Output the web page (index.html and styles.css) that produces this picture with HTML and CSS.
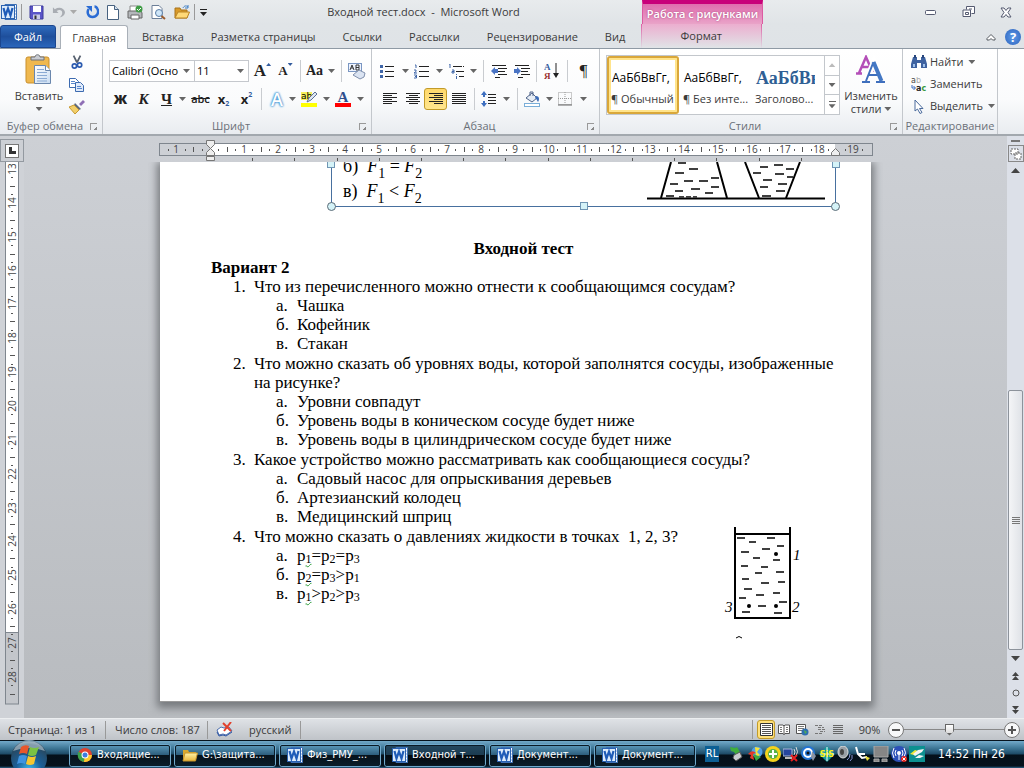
FILE: index.html
```html
<!DOCTYPE html>
<html lang="ru">
<head>
<meta charset="utf-8">
<title>Входной тест.docx - Microsoft Word</title>
<link rel="stylesheet" href="styles.css">
</head>
<body>
<svg class="defs" width="0" height="0" aria-hidden="true">
  <defs>
    <linearGradient id="gPaper" x1="0" y1="0" x2="1" y2="1"><stop offset="0" stop-color="#fff"/><stop offset="1" stop-color="#c8dcf2"/></linearGradient>
    <linearGradient id="gFolder" x1="0" y1="0" x2="0" y2="1"><stop offset="0" stop-color="#fff3a8"/><stop offset="1" stop-color="#e8b53a"/></linearGradient>
    <radialGradient id="gOrb" cx=".5" cy=".85" r=".9"><stop offset="0" stop-color="#3fc0f4"/><stop offset=".4" stop-color="#1b5f98"/><stop offset=".8" stop-color="#28485f"/><stop offset="1" stop-color="#a9c9dc"/></radialGradient>
  </defs>
  <symbol id="word" viewBox="0 0 16 16"><path d="M4 .5h11.500v15H4z" fill="#fff" stroke="#3c6fb5"/><path d="M13 4h2M13 7h2M13 10h2M13 13h2" stroke="#7ba3d8"/><rect x=".5" y="1.500" width="13" height="13" fill="#dcebfb" stroke="#2a62b0"/><path d="M2.500 4l2 7.500L7 4.500l2.500 7 2-7.500" fill="none" stroke="#1f5cb8" stroke-width="2.200"/></symbol>
  <symbol id="undo" viewBox="0 0 14 14"><path d="M1 2v6h6L5 6c3-2 6-1 6 2 0 2-1 3-3 5 4-1 6-3 6-6C13 3 8 1 3 4z"/></symbol>
</svg>

<header class="titlebar">
  <div class="quick">
    <svg width="16" height="16"><use href="#word"/></svg>
    <i class="bar"></i>
    <button class="save" aria-label="Сохранить"><svg width="15" height="15" viewBox="0 0 15 15"><path d="M1 1h13v13H2l-1-1z" fill="#5a55c8" stroke="#3d3a9a"/><path d="M4 1h8v6H4z" fill="#fff"/><path d="M4 9.500h7V14H4z" fill="#c9cce8"/><path d="M5.500 10.500h2V14h-2z" fill="#333"/></svg></button>
    <button aria-label="Отменить"><svg width="13" height="14" fill="#a9adb3"><use href="#undo"/></svg></button>
    <i class="arrow pale"></i>
    <button aria-label="Повторить"><svg width="13" height="14" viewBox="0 0 13 14"><path d="M2.500 4c-2 4 0 8 4 8s7-4 5-8c-.7-1.500-2-2.500-3-2.500" fill="none" stroke="#2b6cd4" stroke-width="2.500"/><path d="M0 1h6v6z" fill="#2b6cd4"/></svg></button>
    <button aria-label="Создать"><svg width="12" height="15" viewBox="0 0 12 15"><path d="M.5.500h7l4 4v10H.5z" fill="#fff" stroke="#46617f"/><path d="M7.500.500v4h4" fill="#d5e2f0" stroke="#46617f"/></svg></button>
    <button aria-label="Печать"><svg width="16" height="15" viewBox="0 0 16 15"><path d="M3 1h8v6H3z" fill="#fff" stroke="#888"/><path d="M1 6h13l1 2v5H1z" fill="#b4b7bb" stroke="#666"/><path d="M4 10h8v4H4z" fill="#fff" stroke="#666"/><circle cx="12" cy="4" r="3.500" fill="#3f9c45"/><path d="M10 4l1.500 1.500L14 3" fill="none" stroke="#fff"/></svg></button>
    <button aria-label="Просмотр"><svg width="15" height="15" viewBox="0 0 15 15"><path d="M1 .5h7l3 3v10H1z" fill="#fff" stroke="#6c7f98"/><circle cx="8" cy="8" r="3.500" fill="#cfe6f8" stroke="#5a7da5"/><path d="M10.500 11l3.500 3" stroke="#9a5b2c" stroke-width="2"/></svg></button>
    <button aria-label="Открыть"><svg width="16" height="14" viewBox="0 0 16 14"><path d="M1 3h5l1 2h6v8H1z" fill="#d99a28" stroke="#a8731c"/><path d="M1 13l3-6h11.500L13 13z" fill="#ffd977" stroke="#b98424"/><path d="M9 3c1-2 3-3 5-1m0-2v3h-3" fill="none" stroke="#3d7dc4"/></svg></button>
    <i class="bar"></i>
    <button aria-label="Настройка панели"><svg width="7" height="7" viewBox="0 0 7 7"><path d="M0 .5h7" stroke="#222"/><path d="M0 3h7L3.500 7z" fill="#222"/></svg></button>
  </div>
  <h1 class="title">Входной тест.docx&nbsp; -&nbsp; Microsoft Word</h1>
  <div class="context-title">Работа с рисунками</div>
  <div class="win">
    <button aria-label="Свернуть"><svg width="12" height="12" viewBox="0 0 12 12"><rect x=".5" y="4.500" width="10" height="4" rx="1" fill="#fff" stroke="#555a70"/></svg></button>
    <button aria-label="Развернуть"><svg width="13" height="13" viewBox="0 0 13 13"><path d="M4.500 3.500v-3h8v7h-3M1 4h7.500v6.500H1z" fill="#fff" stroke="#555a70"/><path d="M3.500 6.500h3v2h-3zM7 3h3" fill="none" stroke="#555a70"/></svg></button>
    <button aria-label="Закрыть"><svg width="12" height="11" viewBox="0 0 12 11"><path d="M1 1h3l2 2.500L8 1h3L8 5.500l3 4.500H8L6 7.500 4 10H1l3-4.500z" fill="#fff" stroke="#555a70"/></svg></button>
  </div>
</header>

<nav class="tabs">
  <button class="file">Файл</button>
  <button class="tab active">Главная</button>
  <button class="tab">Вставка</button>
  <button class="tab">Разметка страницы</button>
  <button class="tab">Ссылки</button>
  <button class="tab">Рассылки</button>
  <button class="tab">Рецензирование</button>
  <button class="tab">Вид</button>
  <button class="tab context">Формат</button>
  <div class="help">
    <button aria-label="Свернуть ленту"><svg width="10" height="8" viewBox="0 0 10 8"><path d="M1 5.500l4-4 4 4v1.500H6.500L5 5.500 3.500 7H1z" fill="#fff" stroke="#555a60"/></svg></button>
    <button class="qmark" aria-label="Справка">?</button>
  </div>
</nav>

<section class="ribbon">
  <div class="group clipboard">
    <div class="body">
      <button class="big paste"><svg width="28" height="32" viewBox="0 0 28 32"><rect x="1" y="3" width="23" height="26" rx="2" fill="#efb84f" stroke="#c98f2c"/><path d="M6 6V3h4c0-3 5-3 5 0h4v3z" fill="#c9ccd2" stroke="#6c7078"/><path d="M9.500 11.500h11l5 5v13h-16z" fill="url(#gPaper)" stroke="#6a87ad"/><path d="M20.500 11.500v5h5" fill="#fff" stroke="#6a87ad"/><path d="M12 15.500h7M12 18.500h10M12 21.500h10M12 24.500h10M12 27h10" stroke="#8aaad4"/></svg><span>Вставить</span><i class="arrow"></i></button>
      <div class="side">
        <button aria-label="Вырезать"><svg width="12" height="15" viewBox="0 0 14 16"><path d="M3 0l4 8M11 0L7 8" stroke="#56606e" stroke-width="2"/><circle cx="4" cy="12" r="2.500" fill="none" stroke="#2c5bb0" stroke-width="2"/><circle cx="10" cy="11" r="2.500" fill="none" stroke="#2c5bb0" stroke-width="2"/></svg></button>
        <button aria-label="Копировать"><svg width="16" height="14" viewBox="0 0 16 14"><path d="M.5.500h6l3 3v6h-9z" fill="#fff" stroke="#3d6bb0"/><path d="M6.500 4.500h5l3 3v6h-8z" fill="#dfeafa" stroke="#3d6bb0"/><path d="M2 3.500h4M2 5.500h4M8 8.500h4M8 10.500h5" stroke="#5a88cc"/></svg></button>
        <button aria-label="Формат по образцу"><svg width="16" height="14" viewBox="0 0 16 14"><path d="M10 4l4-4 2 2-4 4z" fill="#8f6fb5"/><path d="M6 3l6 6-2 1-5-5z" fill="#5e6a7c"/><path d="M5 5l5 5-4 4-6-7z" fill="#f2cf6a" stroke="#c69a34"/></svg></button>
      </div>
    </div>
    <div class="label"><span>Буфер обмена</span><i class="launcher"></i></div>
  </div>

  <div class="group font">
    <div class="body rows">
      <div class="row">
        <select class="family" aria-label="Шрифт"><option>Calibri (Осно</option></select><select class="size" aria-label="Размер"><option>11</option></select>
        <button class="t serif grow" aria-label="Увеличить">A<i class="up"></i></button>
        <button class="t serif shrink" aria-label="Уменьшить">A<i class="down"></i></button>
        <i class="sep"></i>
        <button class="t drop serif case">Aa<i class="arrow"></i></button>
        <i class="sep"></i>
        <button class="t" aria-label="Очистить формат"><svg width="18" height="17" viewBox="0 0 18 17"><rect x=".5" y=".5" width="13" height="8" fill="#eef4ff" stroke="#7a96c2"/><path d="M2 7l2-5 2 5M3 5h2M8 2v5h3V4.500H8h3V2z" fill="none" stroke="#333"/><path d="M5 12l6-5 6 3-1 4-4 2z" fill="#dbe4f2" stroke="#7f8fac"/></svg></button>
      </div>
      <div class="row">
        <button class="t bold">Ж</button>
        <button class="t serif ital">К</button>
        <button class="t drop serif und"><u>Ч</u><i class="arrow"></i></button>
        <button class="t strike"><s>abc</s></button>
        <button class="t idx">x<sub>2</sub></button>
        <button class="t idx">x<sup>2</sup></button>
        <i class="sep"></i>
        <button class="t drop glow">A<i class="arrow"></i></button>
        <button class="t drop" aria-label="Выделение цветом"><svg width="17" height="17" viewBox="0 0 17 17"><rect y="1" width="11" height="8" fill="#f5ef5c"/><text x="0" y="8" font-size="9" class="svgsans">ab</text><path d="M6 11l2-4 6-6 2 2-6 6z" fill="#dfe7f2" stroke="#5d7096"/><rect y="12" width="16" height="4" fill="#ff0"/></svg><i class="arrow"></i></button>
        <button class="t drop" aria-label="Цвет текста"><svg width="16" height="17" viewBox="0 0 16 17"><text x="8" y="11" font-size="15" text-anchor="middle" class="svgserif" fill="#2f4f8f">A</text><rect y="12" width="16" height="4" fill="#f00"/></svg><i class="arrow"></i></button>
      </div>
    </div>
    <div class="label"><span>Шрифт</span><i class="launcher"></i></div>
  </div>

  <div class="group para">
    <div class="body rows">
      <div class="row">
        <button class="t drop" aria-label="Маркеры"><svg width="14" height="14" viewBox="0 0 14 14"><path d="M5 2.500h9M5 7.500h9M5 12.500h9" stroke="#222"/><path d="M0 1h3v3H0zM0 6h3v3H0zM0 11h3v3H0z" fill="#3f66a8"/></svg><i class="arrow"></i></button>
        <button class="t drop" aria-label="Нумерация"><svg width="15" height="15" viewBox="0 0 15 15"><path d="M5 2.500h10M5 7.500h10M5 12.500h10" stroke="#222"/><path d="M1 1h1v3M0 6h2v1.500L0 9h3M0 11h2.500v3H0M1 12.500h1" fill="none" stroke="#3f66a8"/></svg><i class="arrow"></i></button>
        <button class="t drop" aria-label="Многоуровневый список"><svg width="16" height="15" viewBox="0 0 16 15"><path d="M5 2.500h11M8 7.500h8M11 12.500h5" stroke="#222" stroke-dasharray="9 1"/><path d="M1 0h1v4M4 6h2v3H4V7.500h2M8.500 10v1M8.500 12v3" fill="none" stroke="#3f66a8"/></svg><i class="arrow"></i></button>
        <i class="sep"></i>
        <button class="t" aria-label="Уменьшить отступ"><svg width="16" height="14" viewBox="0 0 16 14"><path d="M1 1.500h14M7 4.500h9M7 7.500h7M7 10.500h9M4 13.500h5" stroke="#222"/><path d="M0 7l4-4v2h3v4H4v2z" fill="#4a74c4"/></svg></button>
        <button class="t" aria-label="Увеличить отступ"><svg width="16" height="14" viewBox="0 0 16 14"><path d="M1 1.500h14M7 4.500h9M7 7.500h7M7 10.500h9M4 13.500h5" stroke="#222"/><path d="M7 7L3 3v2H0v4h3v2z" fill="#4a74c4"/></svg></button>
        <i class="sep"></i>
        <button class="t" aria-label="Сортировка"><svg width="16" height="16" viewBox="0 0 16 16"><text x="0" y="7" font-size="9" class="svgserif" fill="#335c9e">А</text><text x="0" y="16" font-size="9" class="svgserif" fill="#9b2f2f">Я</text><path d="M12 0v12" stroke="#222"/><path d="M9 10h6l-3 5z" fill="#222"/></svg></button>
        <i class="sep wide"></i>
        <button class="t pil">¶</button>
      </div>
      <div class="row">
        <button class="t" aria-label="По левому краю"><svg width="14" height="12" viewBox="0 0 14 12"><path d="M0 .5h14M0 2.500h9M0 4.500h14M0 6.500h9M0 8.500h14M0 10.500h9" stroke="#222"/></svg></button>
        <button class="t" aria-label="По центру"><svg width="14" height="12" viewBox="0 0 14 12"><path d="M0 .5h14M3 2.500h9M0 4.500h14M3 6.500h9M0 8.500h14M3 10.500h9" stroke="#222"/></svg></button>
        <button class="t on" aria-label="По правому краю"><svg width="14" height="12" viewBox="0 0 14 12"><path d="M0 .5h14M5 2.500h9M0 4.500h14M5 6.500h9M0 8.500h14M5 10.500h9" stroke="#222"/></svg></button>
        <button class="t" aria-label="По ширине"><svg width="14" height="12" viewBox="0 0 14 12"><path d="M0 .5h14M0 2.500h14M0 4.500h14M0 6.500h14M0 8.500h14M0 10.500h14" stroke="#222"/></svg></button>
        <i class="sep wide"></i>
        <button class="t drop" aria-label="Интервал"><svg width="15" height="16" viewBox="0 0 15 16"><path d="M7 3.500h8M7 6.500h8M7 9.500h8M7 12.500h8" stroke="#222"/><path d="M3 0l3 4H4v2H2V4H0zM3 16l3-4H4v-2H2v2H0z" fill="#3e6fc0"/></svg><i class="arrow"></i></button>
        <i class="sep wide"></i>
        <button class="t drop" aria-label="Заливка"><svg width="16" height="16" viewBox="0 0 16 16"><path d="M2 7l6-5 5 5-5 4z" fill="#e6edf6" stroke="#51658a"/><path d="M6 5V1h3v4" fill="none" stroke="#51658a"/><path d="M12 5c3 0 4 3 2 6-1-1-1-3-3-4z" fill="#3a6ab8"/><rect x=".5" y="12.500" width="15" height="3" fill="#fff" stroke="#7aaed8"/></svg><i class="arrow"></i></button>
        <button class="t drop" aria-label="Границы"><svg width="14" height="14" viewBox="0 0 14 14"><path d="M.5.500h13v12H.5zM7 0v12M0 6.500h14" fill="none" stroke="#999" stroke-dasharray="1 1"/><path d="M0 13h14" stroke="#666"/></svg><i class="arrow"></i></button>
      </div>
    </div>
    <div class="label"><span>Абзац</span><i class="launcher"></i></div>
  </div>

  <div class="group styles">
    <div class="body">
      <div class="gallery">
        <button class="style sel"><b>АаБбВвГг,</b><span>¶ Обычный</span></button>
        <button class="style"><b>АаБбВвГг,</b><span>¶ Без инте...</span></button>
        <button class="style head"><b>АаБбВв</b><span>Заголово...</span></button>
        <div class="scroller"><button class="dis" aria-label="Вверх"><i class="arrow flip"></i></button><button aria-label="Вниз"><i class="arrow"></i></button><button aria-label="Ещё"><i class="line"></i><i class="arrow"></i></button></div>
      </div>
      <button class="big change"><svg width="30" height="29" viewBox="0 0 30 29"><g fill="none"><path d="M3 18L10 2l7 16M6 12h8M0 18.500h6M12 18.500h7" stroke="#b44fb8" stroke-width="2.500"/><path d="M10 26L18 7l8 19M13 20h10" stroke="#fff" stroke-width="6"/><path d="M10 26L17.500 7M13 20h9M6 27h8" stroke="#3f6fbd" stroke-width="2"/><path d="M17.500 7l8 19" stroke="#4478c4" stroke-width="4"/><path d="M20 27h9" stroke="#3f6fbd" stroke-width="2"/></g></svg><span>Изменить</span><span>стили <i class="arrow"></i></span></button>
    </div>
    <div class="label"><span>Стили</span><i class="launcher"></i></div>
  </div>

  <div class="group edit">
    <div class="body list">
      <button><svg width="16" height="14" viewBox="0 0 16 14"><path d="M2 2h4v3h4V2h4l2 7v4h-6V8H6v5H0V9z" fill="#3e62a0"/><path d="M3 0h2v3H3zM11 0h2v3h-2z" fill="#27457c"/><path d="M2 9h2v3H2zM12 9h2v3h-2z" fill="#9fc0ea"/></svg>Найти<i class="arrow"></i></button>
      <button><svg width="16" height="15" viewBox="0 0 16 15"><text x="0" y="6" font-size="8" class="svgsans" fill="#444">a<tspan fill="#aaa">b</tspan></text><text x="5" y="14" font-size="8" font-weight="bold" class="svgsans" fill="#222">a<tspan fill="#3a9a3e">c</tspan></text><path d="M1 8v3h3M2.500 9L4.500 11l-2 2" fill="none" stroke="#3e6fc0"/></svg>Заменить</button>
      <button><svg width="16" height="15" viewBox="0 0 16 15"><path d="M4 1v11l2.500-2L9 14.500l2-1-2.500-4H12z" fill="#fff" stroke="#4a6a9c"/></svg>Выделить<i class="arrow"></i></button>
    </div>
    <div class="label"><span>Редактирование</span></div>
  </div>
</section>

<main class="work">
  <div class="corner"><span><svg width="7" height="7" viewBox="0 0 7 7"><path d="M1.500 0v5.500H7" fill="none" stroke="#333" stroke-width="3"/></svg></span></div>
  <div class="hrule"><svg id="hruler" width="716" height="24" viewBox="0 0 716 24" role="img" aria-label="Горизонтальная линейка"></svg></div>
  <div class="rtop"><i></i><span><svg width="12" height="12" viewBox="0 0 12 12"><path d="M1 1h7v5H1zM5 5h6v6H5z" fill="#fff" stroke="#666" stroke-dasharray="2 1"/></svg></span></div>

  <div class="vrule"><svg id="vruler" width="14" height="543" viewBox="0 0 14 543" role="img" aria-label="Вертикальная линейка"></svg></div>

  <div class="canvas">
    <article class="page">
      <div class="picture">
        <div class="answers">
          <p>б)&nbsp; <em>F</em><sub>1</sub> = <em>F</em><sub>2</sub></p>
          <p>в)&nbsp; <em>F</em><sub>1</sub> &lt; <em>F</em><sub>2</sub></p>
        </div>
        <svg class="vessels" width="180" height="40" viewBox="0 0 180 40"><g stroke="#000" fill="none"><path d="M1 36.500h178" stroke-width="2"/><path d="M25 0L15 36M71 0l10 36M99 0l14 36M154 0l-14 36" stroke-width="2"/><path d="M32 1h8M43 7h9M29 11h9M65 16h8M38 19h9M53 19h9M24 22h8M45 27h9M65 25h8M29 29h8M59 31h8M20 34h8M128 3h9M114 5h8M140 7h8M107 11h8M129 12h9M141 15h6M117 18h9M132 22h9M114 25h8M130 29h9M116 34h9" stroke-width="1.500"/><path d="M33 35h18" stroke-width="2" stroke="#444" stroke-dasharray="5 2"/></g></svg>
        <i class="h tl"></i><i class="h tr"></i><i class="h bl"></i><i class="h bc"></i><i class="h br"></i>
      </div>
      <h2>Входной тест</h2>
      <h3>Вариант 2</h3>
      <ol class="quiz">
        <li><span class="n">1.</span><div>Что из перечисленного можно отнести к сообщающимся сосудам?
          <ul><li><span class="n">а.</span>Чашка</li><li><span class="n">б.</span>Кофейник</li><li><span class="n">в.</span>Стакан</li></ul></div></li>
        <li><span class="n">2.</span><div>Что можно сказать об уровнях воды, которой заполнятся сосуды, изображенные на рисунке?
          <ul><li><span class="n">а.</span>Уровни совпадут</li><li><span class="n">б.</span>Уровень воды в коническом сосуде будет ниже</li><li><span class="n">в.</span>Уровень воды в цилиндрическом сосуде будет ниже</li></ul></div></li>
        <li><span class="n">3.</span><div>Какое устройство можно рассматривать как сообщающиеся сосуды?
          <ul><li><span class="n">а.</span>Садовый насос для опрыскивания деревьев</li><li><span class="n">б.</span>Артезианский колодец</li><li><span class="n">в.</span>Медицинский шприц</li></ul></div></li>
        <li><span class="n">4.</span><div>Что можно сказать о давлениях жидкости в точках&nbsp; 1, 2, 3?
          <ul><li><span class="n">а.</span><span>р<sub class="g">1</sub>=р<sub>2</sub>=р<sub>3</sub></span></li><li><span class="n">б.</span><span>р<sub class="g">2</sub>=р<sub>3</sub>&gt;р<sub>1</sub></span></li><li><span class="n">в.</span><span>р<sub class="g">1</sub>&gt;р<sub>2</sub>&gt;р<sub>3</sub></span></li></ul></div>
          <svg class="tank" width="78" height="114" viewBox="0 0 78 114"><g fill="none" stroke="#000"><path d="M11 1v91h55V1M11 8h54" stroke-width="2"/><path d="M13 12h8M43 12h8M25 16h7M53 20h7M38 23h8M17 26h8M29 32h7M49 34h7M17 40h7M37 41h7M52 46h8M31 47h7M18 53h7M37 57h8M54 56h7M20 63h8M49 67h7M32 69h8M15 72h7M55 76h8M34 80h8M18 86h8M50 87h8" stroke-width="1.500"/><path d="M12 112q3-3 6 0" stroke-width="1"/></g><circle cx="52" cy="28" r="2"/><circle cx="25" cy="80" r="2"/><circle cx="52" cy="80" r="2"/><g class="svgital" font-size="15"><text x="69" y="34">1</text><text x="68" y="86">2</text><text x="1" y="86">3</text></g></svg></li>
      </ol>
    </article>
  </div>

  <div class="vscroll">
    <button class="sb" aria-label="Вверх"><i class="arrow flip dark"></i></button>
    <div class="trough"></div>
    <div class="thumb"><i></i><i></i><i></i><i></i></div>
    <button class="sb" aria-label="Вниз"><i class="arrow dark"></i></button>
    <button class="sb" aria-label="Предыдущая страница"><svg width="7" height="8" viewBox="0 0 7 8"><path d="M0 4l3.500-4L7 4zM0 8l3.500-4L7 8z" fill="#444"/></svg></button>
    <button class="sb" aria-label="Объект перехода"><svg width="8" height="8" viewBox="0 0 8 8"><circle cx="4" cy="4" r="3" fill="none" stroke="#555"/></svg></button>
    <button class="sb" aria-label="Следующая страница"><svg width="7" height="8" viewBox="0 0 7 8"><path d="M0 0h7L3.500 4zM0 4h7L3.500 8z" fill="#444"/></svg></button>
  </div>
</main>

<footer class="status">
  <span class="cell c1">Страница: 1 из 1</span>
  <span class="cell c2">Число слов: 187</span>
  <span class="cell c3"><svg width="17" height="15" viewBox="0 0 17 15"><path d="M1 8l4-3 3 1 5-1 3 4-6 4-3-1-4 1z" fill="#fff" stroke="#4b6dae"/><path d="M1 10l2 4 4-1 3 1 6-4" fill="none" stroke="#2d55a4"/><path d="M7 1l8 8M15 0L8 9" stroke="#e2402c" stroke-width="2"/></svg>русский</span>
  <div class="views">
    <button class="vb on" aria-label="Разметка страницы"><svg width="13" height="13" viewBox="0 0 13 13"><path d="M.5.500h12v12H.5z" fill="#fff" stroke="#333"/><path d="M2 2.500h9M2 4.500h9M2 6.500h9M2 8.500h9M2 10.500h9" stroke="#555"/></svg></button>
    <button class="vb" aria-label="Режим чтения"><svg width="12" height="12" viewBox="0 0 12 12"><path d="M.5 1h4.500l1 1 1-1h4.500v8.500H7l-1 1-1-1H.5zM6 2v9" fill="#fff" stroke="#555"/><path d="M2 3.500h2M2 5.500h2M2 7.500h2M8 3.500h2M8 5.500h2M8 7.500h2" stroke="#777"/></svg></button>
    <button class="vb" aria-label="Веб-документ"><svg width="13" height="12" viewBox="0 0 13 12"><path d="M.5.500h9v9h-9z" fill="#fff" stroke="#555"/><path d="M2 2.500h6M2 4.500h6M2 6.500h4" stroke="#777"/><circle cx="9" cy="8" r="3.500" fill="#2f6fae"/><path d="M8 6l3 2-2 2z" fill="#4fae53"/></svg></button>
    <button class="vb" aria-label="Структура"><svg width="10" height="10" viewBox="0 0 10 10"><path d="M0 .5h8M3 2.500h6M3 4.500h7M5 6.500h5M0 8.500h8" stroke="#777" stroke-dasharray="3 1"/></svg></button>
    <button class="vb" aria-label="Черновик"><svg width="10" height="10" viewBox="0 0 10 10"><path d="M0 .5h10M0 2.500h10M0 4.500h10M0 6.500h10M0 8.500h10" stroke="#666"/></svg></button>
  </div>
  <label class="pct" for="zoom">90%</label>
  <button class="zb" aria-label="Уменьшить масштаб"><svg width="16" height="16" viewBox="0 0 16 16"><circle cx="8" cy="8" r="7.500" fill="#f7f8f9" stroke="#777"/><path d="M4 8h8" stroke="#555" stroke-width="2"/></svg></button>
  <input id="zoom" class="zoom" type="range" min="0" max="100" value="45">
  <button class="zb" aria-label="Увеличить масштаб"><svg width="16" height="16" viewBox="0 0 16 16"><circle cx="8" cy="8" r="7.500" fill="#f7f8f9" stroke="#777"/><path d="M4 8h8M8 4v8" stroke="#555" stroke-width="2"/></svg></button>
</footer>

<footer class="taskbar">
  <button class="start" aria-label="Пуск"><svg width="38" height="28" viewBox="0 0 38 28"><circle cx="19" cy="18" r="18" fill="url(#gOrb)"/><path d="M3 11a18 18 0 0 1 32 0q-16-6-32 0" fill="#cfe0ea" opacity=".55"/><path d="M11 7q4-3 8-1l-2 8q-4-2-8 0z" fill="#e8572c"/><path d="M20 7q4 2 9 0l-3 8q-4 2-8 0z" fill="#7cc243"/><path d="M9 16q4-2 8 0l-2 8q-4-2-8 0z" fill="#3f93e0"/><path d="M18 16q4 2 8 0l-2 8q-4 2-8 0z" fill="#f7c62f"/></svg></button>
  <div class="tasks">
    <button><svg width="16" height="16" viewBox="0 0 16 16"><circle cx="8" cy="8" r="7" fill="#e0432f"/><path d="M8 8L1.500 4.800A7 7 0 0 0 7 15z" fill="#3ba24b"/><path d="M8 8h7A7 7 0 0 1 7 15z" fill="#fbcb2e"/><circle cx="8" cy="8" r="3.500" fill="#fff"/><circle cx="8" cy="8" r="2.500" fill="#3c7de0"/></svg><span>Входящие...</span></button>
    <button><svg width="16" height="14" viewBox="0 0 16 14"><path d="M1 2h5l1 2h7v8H1z" fill="#d9a92f"/><path d="M1 13l2-8h12.500l-2 8z" fill="url(#gFolder)" stroke="#c4922a"/></svg><span>G:\защита...</span></button>
    <button><svg width="16" height="16"><use href="#word"/></svg><span>Физ_РМУ_...</span></button>
    <button class="cur"><svg width="16" height="16"><use href="#word"/></svg><span>Входной т...</span></button>
    <button><svg width="16" height="16"><use href="#word"/></svg><span>Документ...</span></button>
    <button><svg width="16" height="16"><use href="#word"/></svg><span>Документ...</span></button>
  </div>
  <span class="lang">RL</span>
  <div class="tray">
    <svg viewBox="0 0 16 16"><path d="M1 1l5 1 2-1 3 5-4 3-2-3-3-1z" fill="#3fae3c"/><path d="M5 9l6-3 2 5-6 4-3-3z" fill="#c8ccd0" stroke="#555"/></svg>
    <svg viewBox="0 0 16 16"><circle cx="10" cy="6" r="5.500" fill="#4fa0e8"/><path d="M8 1l5 1-3 4 3 3-4 2z" fill="#f6e23a"/><path d="M1 8q4-5 8-1l-3 1 1 6-4-2 1-3z" fill="#e23a28"/><path d="M6 8l8 3-5 4z" fill="#39a845"/></svg>
    <svg viewBox="0 0 16 16"><circle cx="8" cy="8" r="8" fill="#f4d21c"/><circle cx="8" cy="8" r="5" fill="#58b04a"/><path d="M8 4v8M4 8h8" stroke="#fff" stroke-width="2"/></svg>
    <svg viewBox="0 0 16 16"><path d="M0 3h9v7H0z" fill="#26459c" stroke="#a9b8d8"/><path d="M2 12h7" stroke="#bbb" stroke-width="2"/><path d="M11 3q2 3 0 6M13 1q3 5 0 9" fill="none" stroke="#ddd"/><path d="M8 9l6 6M14 9l-6 6" stroke="#e82020" stroke-width="2"/></svg>
    <svg viewBox="0 0 16 16"><circle cx="7" cy="7" r="7" fill="#2474d4"/><circle cx="7" cy="7" r="4" fill="none" stroke="#fff" stroke-width="2"/><circle cx="7" cy="7" r="1.500" fill="#111"/><path d="M11 5l4 5-3 5-2-4z" fill="#8a94a4"/></svg>
    <svg viewBox="0 0 16 16"><path d="M8 0l8 8-8 8-8-8z" fill="#139a9a"/><path d="M8 1v14M1 8h14" stroke="#fff"/><text x="8" y="11" font-size="8" font-weight="bold" text-anchor="middle" class="svgsans" fill="#fff21c">SiS</text></svg>
    <svg viewBox="0 0 16 16"><ellipse cx="6" cy="6" rx="5" ry="6" fill="#9aa0a6" stroke="#ddd"/><ellipse cx="5" cy="6" rx="2" ry="3" fill="#444"/><path d="M10 14q3-2 3-6M13 15q3-2 2-6" fill="none" stroke="#8b96d8"/></svg>
    <svg viewBox="0 0 16 16"><path d="M1 1l2 7 4 4 5-1M4 8h6" fill="none" stroke="#fff" stroke-width="2"/><path d="M10 10l5 2-3 3z" fill="#e8dc3a"/></svg>
    <svg viewBox="0 0 16 16"><path d="M1 0h14v11H1zM1 13h5v3H1zM9 13h5v3H9z" fill="#868686" stroke="#aaa"/></svg>
    <svg viewBox="0 0 16 16"><circle cx="8" cy="8" r="8" fill="#2c50b8"/><path d="M8 7v7M5 4q-2 3 0 6M11 4q2 3 0 6M3 2q-3 5 0 10M13 2q3 5 0 9" fill="none" stroke="#fff"/><circle cx="8" cy="7" r="2" fill="#fff"/><circle cx="13" cy="13" r="3" fill="#e8261c"/><path d="M11.500 11.500l3 3M14.500 11.500l-3 3" stroke="#fff"/></svg>
    <svg viewBox="0 0 16 16"><path d="M0 0h16v16H0z" fill="#0c9090"/><path d="M1 8l5-4 3 1-4 4z" fill="#f0e838"/><path d="M4 8l5-4 6-1-2 3-7 4zM6 12l4-3 5 1-4 2z" fill="#f4f4f4"/></svg>
  </div>
  <time class="clock">14:52 Пн 26</time>
</footer>
<script src="rulers.js"></script>
</body>
</html>
```
FILE: styles.css
```css
* { box-sizing: border-box; }
body { margin: 0; height: 100vh; min-height: 700px; display: flex; flex-direction: column; overflow: hidden; font: 11px/16px "Open Sans", "Noto Sans", sans-serif; color: #3b3b3b; background: #cdd0d5; }
button { font: inherit; color: inherit; background: none; border: 0; padding: 0; margin: 0; display: flex; align-items: center; justify-content: center; }
h1, h2, h3, p, ol, ul { margin: 0; padding: 0; list-style: none; font-size: inherit; }
svg { flex: none; display: block; }
.defs { position: absolute; }
.svgsans { font-family: "DejaVu Sans", sans-serif; }
.svgserif { font-family: "Liberation Serif", serif; font-weight: bold; }
.svgital { font-family: "Liberation Serif", serif; font-style: italic; }
.arrow { flex: none; display: inline-block; width: 7px; height: 4px; background: #666; clip-path: polygon(0 0, 100% 0, 50% 100%); }
.arrow.flip { clip-path: polygon(50% 0, 100% 100%, 0 100%); }
.arrow.pale { background: #aaa; }
.arrow.dark { width: 9px; height: 5px; background: #444; }

.titlebar { flex: none; height: 24px; display: grid; grid-template-columns: 205px 437px 121px 1fr; background: linear-gradient(#e8ebed, #e0e4e7); }
.quick { display: flex; align-items: center; gap: 8px; padding-left: 1px; }
.quick .bar { flex: none; width: 1px; height: 16px; background: #999; margin: 0 -3px 0 -4px; }
.quick .save { margin-left: 2px; }
.quick .arrow { margin: 0 1px 0 -3px; }
.title { font-weight: normal; line-height: 24px; text-align: center; white-space: nowrap; }
.context-title { border-top: 4px solid #c8007a; background: linear-gradient(#df6dae, #e9a3c8); color: #fff; font-weight: 600; text-align: center; line-height: 20px; white-space: nowrap; border-left: 1px solid #dc5ba2; border-right: 1px solid #dc5ba2; text-shadow: 0 0 2px #a34478; }
.win { display: flex; justify-content: flex-end; align-items: center; gap: 25px; padding-right: 12px; }

.tabs { flex: none; height: 25px; display: flex; align-items: stretch; background: linear-gradient(#e0e4e7, #dfe3e7); border-bottom: 1px solid #8f9aa5; padding-top: 1px; }
.tab { padding: 0 14px 0 13px; white-space: nowrap; flex: none; }
.tab.active { background: #fff; border: 1px solid #a9b0b8; border-bottom: 0; border-radius: 3px 3px 0 0; margin-right: 1px; padding: 0; width: 68px; height: 24px; }
.tab.context { width: 121px; margin: -1px 0 0 2px; background: linear-gradient(#ecaecf, #e0e4e7); border: solid; border-width: 0 1px; border-image: linear-gradient(#dc5ba2, #e0e4e7) 1; }
.file { width: 56px; flex: none; margin-right: 4px; color: #fff; background: linear-gradient(#2f6bbd, #1e4f9c 50%, #2a66bb); border: 1px solid #1a468f; border-radius: 3px 3px 0 0; }
.help { margin-left: auto; display: flex; align-items: center; gap: 9px; padding-right: 3px; }
.qmark { width: 16px; height: 16px; border-radius: 50%; background: radial-gradient(#5f9be8, #2b62bd); color: #fff; font-weight: bold; font-size: 13px; }

.ribbon { flex: none; height: 87px; display: flex; background: linear-gradient(#fff, #fafbfc 60%, #e9ecf0); border-bottom: 2px solid #a2a8ae; }
.group { display: flex; flex-direction: column; border-right: 1px solid #c3c7cc; }
.clipboard { width: 103px; }
.font { width: 269px; }
.para { width: 228px; }
.styles { width: 303px; }
.edit { width: 95px; }
.body { flex: 1; display: flex; min-height: 0; padding-top: 5px; }
.label { height: 16px; display: flex; align-items: center; justify-content: center; color: #6b7078; white-space: nowrap; }
.label span { flex: 1; text-align: center; }
.launcher { width: 7px; height: 7px; border: 1px solid #999; border-width: 1px 0 0 1px; margin-right: 5px; background: linear-gradient(135deg, transparent 45%, #888 45%); background-size: 5px 5px; background-repeat: no-repeat; background-position: 2px 2px; }
.big { flex-direction: column; justify-content: flex-start; line-height: 13px; }
.paste { width: 63px; padding-left: 15px; white-space: nowrap; }
.paste span { margin: 3px 0 5px; }
.side { display: flex; flex-direction: column; gap: 8px; padding: 1px 0 0 6px; align-items: center; }
.rows { flex-direction: column; gap: 6px; padding: 11px 0 0 6px; }
.row { display: flex; align-items: center; height: 22px; }
select { appearance: none; height: 22px; border: 1px solid #c5c8cd; border-radius: 0; font: inherit; color: #000; padding: 0 2px; margin: 0; background: #fff url("data:image/svg+xml,%3Csvg xmlns='http://www.w3.org/2000/svg' width='7' height='4'%3E%3Cpath d='M0 0h7L3.500 4z' fill='%23666'/%3E%3C/svg%3E") no-repeat right 4px center; }
.family { width: 86px; }
.size { width: 55px; margin-left: -1px; margin-right: 2px; }
.t { width: 23px; height: 22px; flex: none; color: #222; }
.t.drop { width: 34px; padding-left: 2px; justify-content: space-between; padding-right: 3px; }
.t.on { border: 1px solid #c29b29; border-radius: 3px; background: linear-gradient(#ffd86b, #ffe68e); }
.sep { width: 7px; height: 22px; flex: none; background: linear-gradient(#c9ccd0, #c9ccd0) no-repeat center / 1px 100%; }
.sep.wide { width: 9px; }
.serif { font-family: "Liberation Serif", serif; font-weight: bold; font-size: 15px; }
.grow { font-size: 17px; }
.shrink { font-size: 13px; }
.up, .down { width: 5px; height: 3px; background: #335c9e; align-self: flex-start; margin-top: 3px; clip-path: polygon(50% 0, 100% 100%, 0 100%); }
.down { clip-path: polygon(0 0, 100% 0, 50% 100%); }
.case { font-size: 14px; }
.bold { font-weight: 900; font-size: 13px; }
.ital { font-style: italic; }
.t.und { padding-left: 6px; }
.strike { font-weight: 600; }
.idx { font-weight: bold; font-size: 13px; }
.idx sub, .idx sup { font-size: 7px; color: #335c9e; line-height: 7px; }
.idx sub { margin-top: 9px; }
.idx sup { margin-bottom: 9px; }
.glow { font-size: 18px; font-weight: 600; }
.t.glow { color: #fff; padding-left: 6px; text-shadow: 0 0 2px #3c8fd0, 0 0 2px #3c8fd0, 0 0 3px #6db4e8; }
.pil { font-size: 17px; font-family: "Liberation Serif", serif; }

.styles .body { padding: 6px 0 0 6px; }
.gallery { display: flex; height: 60px; width: 234px; border: 1px solid #c3c7cc; background: #fff; }
.style { width: 72px; flex: none; flex-direction: column; overflow: hidden; padding: 2px 4px 2px 2px; white-space: nowrap; align-items: flex-start; }
.style b { font-weight: normal; font-size: 12px; color: #000; height: 22px; line-height: 22px; padding-left: 3px; margin-top: 6px; width: 100%; overflow: hidden; text-align: left; }
.style span { padding-left: 2px; height: 20px; line-height: 20px; }
.style.sel { border: 2px solid #d9a73a; border-radius: 3px; padding: 0 2px 0 0; box-shadow: inset 0 0 0 2px #ffe48c; }
.style.head { padding-right: 8px; }
.style.head b { font: bold 18px/22px "Liberation Serif", serif; color: #2f5f95; }
.scroller { display: flex; flex-direction: column; width: 15px; margin-left: auto; border-left: 1px solid #c3c7cc; }
.scroller button { flex: 1; flex-direction: column; gap: 2px; border-bottom: 1px solid #c3c7cc; }
.scroller button:last-child { border: 0; }
.scroller .line { width: 7px; height: 1px; background: #666; }
.dis .arrow { background: #bbb; }
.change { width: 62px; }
.change svg { margin: 0 0 5px; }
.change .arrow { margin: 0 0 2px; }
.edit .list { flex-direction: column; padding: 2px 0 0 8px; align-items: flex-start; }
.list button { height: 22px; gap: 3px; flex: none; }
.list .arrow { margin-left: 2px; }

.work { flex: 1; min-height: 0; display: grid; grid-template: 26px 1fr / 24px 1fr 17px; background: linear-gradient(#cdd0d5, #b8bbbf); }
.corner { border: 1px solid #9399a0; margin-top: 3px; height: 23px; display: flex; align-items: center; justify-content: center; }
.corner span { width: 14px; height: 14px; border: 1px solid #777; background: #fff; display: flex; align-items: center; justify-content: center; }
.hrule { display: flex; justify-content: center; padding-top: 2px; overflow: hidden; }
.vrule { padding-left: 5px; overflow: hidden; background: #cfd2d7; }
.ruler-num { font-size: 10px; fill: #444; text-anchor: middle; font-family: "Open Sans", sans-serif; }
.rtop { background: #dce0e8; display: flex; flex-direction: column; align-items: center; gap: 3px; padding-top: 4px; }
.rtop i { width: 9px; height: 2px; background: #777; }
.rtop span { width: 16px; height: 17px; border: 1px solid #888; display: flex; align-items: center; justify-content: center; }

.canvas { min-width: 0; min-height: 0; display: flex; justify-content: center; padding-bottom: 16px; overflow: hidden; }
.page { width: 711px; background: #fff; padding: 0 35px 0 51px; box-shadow: 0 3px 8px 3px #777a7e; clip-path: inset(0 -12px -14px -12px); border-bottom: 1px solid #999; font: 17px/19px "Liberation Serif", serif; color: #000; }
.picture { position: relative; height: 45px; margin-left: 120px; border: 1px solid #48709f; border-top: 0; display: flex; justify-content: space-between; align-items: flex-end; }
.answers { padding-left: 11px; font-size: 18px; line-height: 25px; height: 44px; display: flex; flex-direction: column; justify-content: flex-end; padding-bottom: 2px; }
.answers p { white-space: nowrap; height: 25px; flex: none; }
.answers sub { font-size: 14px; line-height: 0; vertical-align: -6px; }
.vessels { margin-right: 9px; align-self: flex-start; }
.h { position: absolute; width: 8px; height: 8px; border: 1px solid #7096b4; background: #d5f3f8; }
.bl, .br { border-radius: 50%; width: 9px; height: 9px; bottom: -5px; border-color: #5a6a76; }
.tl, .tr { top: -2px; }
.tl, .bl { left: -5px; }
.tr, .br { right: -5px; }
.bc { left: 50%; margin-left: -4px; bottom: -4px; }
.page h2 { margin-top: 32px; text-align: center; font-weight: bold; }
.page h3 { font-weight: bold; }
.quiz > li { display: flex; padding-left: 22px; margin-bottom: 1px; }
.quiz .n { flex: none; width: 21px; }
.quiz ul { padding-left: 22px; }
.quiz ul li { display: flex; }
.quiz sub { font-size: 12px; line-height: 0; vertical-align: -2px; }
.quiz sub.g { text-decoration: underline wavy #2e9e3a 1px; text-decoration-skip-ink: none; text-underline-offset: 0; }
.tank { margin: -1px 34px -60px auto; }

.vscroll { background: #dce0e8; display: flex; flex-direction: column; }
.sb { height: 17px; flex: none; }
.trough { flex: 211; }
.thumb { flex: 257; border: 1px solid #8d939b; border-radius: 2px; background: linear-gradient(90deg, #f4f5f7, #dfe2e7); margin: 0 1px; display: flex; flex-direction: column; align-items: center; justify-content: center; gap: 1px; }
.thumb i { width: 8px; height: 1px; background: #777; }

.status { flex: none; height: 22px; display: flex; align-items: center; border-top: 1px solid #eceef0; background: linear-gradient(#dfe2e6, #bfc3c8); white-space: nowrap; }
.cell { height: 18px; line-height: 18px; border-right: 1px solid #999; display: flex; align-items: center; }
.c1 { width: 106px; padding-left: 8px; }
.c2 { width: 102px; padding-left: 9px; }
.c3 { width: 93px; padding-left: 8px; gap: 16px; }
.views { margin-left: auto; display: flex; align-items: center; border-left: 1px solid #999; padding-left: 4px; }
.vb { width: 18px; height: 19px; }
.vb.on { border: 1px solid #c29b29; border-radius: 3px; background: #ffe07a; }
.pct { width: 41px; padding-left: 4px; text-align: center; }
.zb { width: 16px; }
.zoom { appearance: none; width: 100px; height: 16px; margin: 0; background: linear-gradient(#888, #888) no-repeat center / 100% 1px; }
.zoom::-webkit-slider-thumb { appearance: none; width: 9px; height: 12px; clip-path: polygon(0 0, 100% 0, 100% 65%, 50% 100%, 0 65%); background: linear-gradient(#fff, #ddd) no-repeat center 1px / 7px 8px, #666; }
.status > .zb:last-child { margin-right: 4px; }

.taskbar { flex: none; height: 28px; display: flex; align-items: center; color: #fff; background: linear-gradient(#06131d 0 1px, #72a9c9 1px, #3f7897 8px, #1d4a66 14px, #04101a 15px, #06121c 26px, #2a6288); font-family: "DejaVu Sans Condensed", "DejaVu Sans", sans-serif; white-space: nowrap; }
.start { width: 38px; margin: 0 21px 0 10px; align-self: flex-start; }
.tasks { display: flex; gap: 3px; padding-top: 2px; }
.tasks button { width: 102px; height: 23px; border: 1px solid #6fa9cc; border-radius: 3px; outline: 1px solid #0a1a26; outline-offset: -2px; background: linear-gradient(#5c99bb, #2a5a78 50%, #06121b 50%, #0a1d2a); justify-content: flex-start; gap: 4px; padding-left: 7px; }
.tasks .cur { background: linear-gradient(#24485f, #1b3b50 50%, #030a10 50%, #081620); }
.lang { margin-left: 9px; width: 14px; height: 16px; line-height: 16px; background: #0c5f94; text-align: center; }
.tray { display: flex; gap: 2px; margin-left: 10px; }
.tray svg { width: 16px; height: 16px; }
.clock { margin-left: auto; padding-right: 19px; font-size: 12px; }
```
FILE: rulers.js
```js
const NS = 'http://www.w3.org/2000/svg';
const CM = 33.85;

function add(svg, name, attrs, text) {
  const el = document.createElementNS(NS, name);
  for (const key in attrs) el.setAttribute(key, attrs[key]);
  if (text !== undefined) el.textContent = text;
  svg.appendChild(el);
}

// Horizontal ruler: zero sits at the left indent.
const h = document.getElementById('hruler');
const zero = 52, right = 677;
add(h, 'rect', { x: 1.5, y: 5.5, width: 713, height: 12, fill: '#cdd0d5', stroke: '#7f868e' });
add(h, 'rect', { x: zero, y: 6, width: right - zero, height: 11, fill: '#fff' });
for (let q = -5; q <= 77; q++) {
  const x = Math.round(zero + q * CM / 4);
  if (q === 0 || q === 74) continue;
  if (q % 4 === 0) add(h, 'text', { x: x, y: 15, class: 'ruler-num' }, Math.abs(q / 4));
  else if (q % 2 === 0) add(h, 'path', { d: `M${x + .5} 9v5`, stroke: '#555' });
  else add(h, 'path', { d: `M${x + .5} 11v2`, stroke: '#555' });
}
for (let i = 1; i <= 14; i++) add(h, 'path', { d: `M${Math.round(zero + i * 42.2) + .5} 20v3`, stroke: '#555' });
add(h, 'path', { d: 'M48.500 2.500h8v4l-4 4-4-4zM48.500 17.500v-3l4-4 4 4v3zM48.500 18.500h8v4h-8z', fill: '#eee', stroke: '#777' });
add(h, 'path', { d: 'M673.500 17.500v-3l4-4 4 4v3z', fill: '#eee', stroke: '#777' });

// Vertical ruler: numbers are turned to read upwards.
const v = document.getElementById('vruler');
add(v, 'rect', { x: .5, y: -1, width: 13, height: 543, fill: '#c3c6cb', stroke: '#7f868e' });
add(v, 'rect', { x: 1, y: 0, width: 12, height: 470, fill: '#fff' });
add(v, 'path', { d: 'M0 470.500h14', stroke: '#7f868e' });
for (let q = 0; q <= 62; q++) {
  const y = Math.round(7 + q * CM / 4);
  if (q % 4 === 0) add(v, 'text', { x: 0, y: 0, transform: `translate(11 ${y}) rotate(-90)`, class: 'ruler-num' }, 13 + q / 4);
  else if (q % 2 === 0) add(v, 'path', { d: `M5 ${y + .5}h5`, stroke: '#555' });
  else add(v, 'path', { d: `M6 ${y + .5}h2`, stroke: '#555' });
}
```
